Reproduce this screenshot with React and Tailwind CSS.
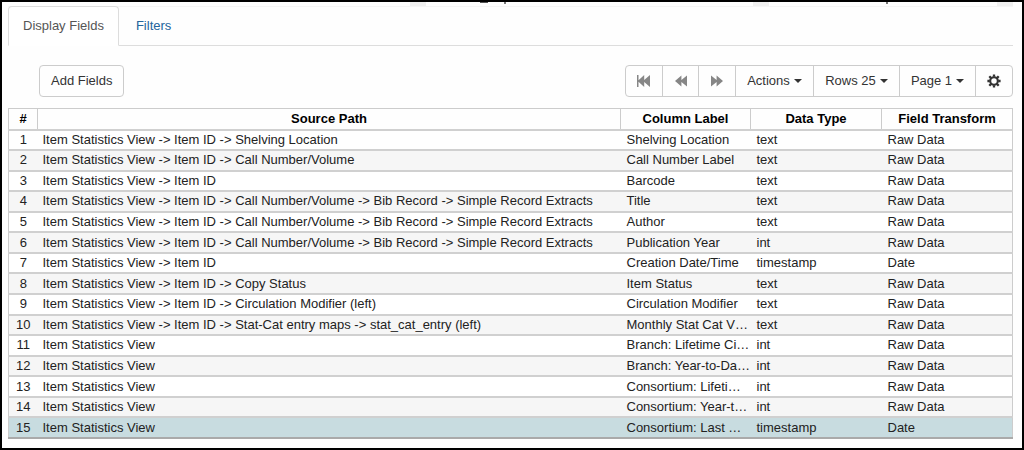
import { useState } from "react"

const rows = [
    ["Item Statistics View -> Item ID -> Shelving Location", "Shelving Location", "text", "Raw Data"],
    ["Item Statistics View -> Item ID -> Call Number/Volume", "Call Number Label", "text", "Raw Data"],
    ["Item Statistics View -> Item ID", "Barcode", "text", "Raw Data"],
    ["Item Statistics View -> Item ID -> Call Number/Volume -> Bib Record -> Simple Record Extracts", "Title", "text", "Raw Data"],
    ["Item Statistics View -> Item ID -> Call Number/Volume -> Bib Record -> Simple Record Extracts", "Author", "text", "Raw Data"],
    ["Item Statistics View -> Item ID -> Call Number/Volume -> Bib Record -> Simple Record Extracts", "Publication Year", "int", "Raw Data"],
    ["Item Statistics View -> Item ID", "Creation Date/Time", "timestamp", "Date"],
    ["Item Statistics View -> Item ID -> Copy Status", "Item Status", "text", "Raw Data"],
    ["Item Statistics View -> Item ID -> Circulation Modifier (left)", "Circulation Modifier", "text", "Raw Data"],
    ["Item Statistics View -> Item ID -> Stat-Cat entry maps -> stat_cat_entry (left)", "Monthly Stat Cat V…", "text", "Raw Data"],
    ["Item Statistics View", "Branch: Lifetime Ci…", "int", "Raw Data"],
    ["Item Statistics View", "Branch: Year-to-Da…", "int", "Raw Data"],
    ["Item Statistics View", "Consortium: Lifeti…", "int", "Raw Data"],
    ["Item Statistics View", "Consortium: Year-t…", "int", "Raw Data"],
    ["Item Statistics View", "Consortium: Last …", "timestamp", "Date"],
]

const Caret = () => (
    <span className="border-x-4 border-t-4 border-x-transparent border-t-[#333]"></span>
)

const FastBackward = () => (
    <svg viewBox="0 0 14 14" className="w-[14px] h-[14px]" fill="currentColor">
        <path d="M0 1h1.5v5.2L7.2 1v5L13 1v12L7.2 8v5L1.5 7.8V13H0z" />
    </svg>
)

const Backward = () => (
    <svg viewBox="0 0 14 14" className="w-[14px] h-[14px]" fill="currentColor">
        <path d="M1 7l6.4-5.5V6L13 1.5v11L7.4 8v4.5z" />
    </svg>
)

const Forward = () => (
    <svg viewBox="0 0 14 14" className="w-[14px] h-[14px]" fill="currentColor">
        <path d="M13 7L6.6 1.5V6L1 1.5v11L6.6 8v4.5z" />
    </svg>
)

const Cog = () => (
    <svg viewBox="0 0 14 14" className="w-[14px] h-[14px]">
        <g fill="none" stroke="#333">
            <circle cx="7" cy="7" r="3.8" strokeWidth="2.1" />
            <path d="M7 .4v2.4M7 11.2v2.4M.4 7h2.4M11.2 7h2.4M2.3 2.3l1.8 1.8M9.9 9.9l1.8 1.8M11.7 2.3L9.9 4.1M4.1 9.9l-1.8 1.8" strokeWidth="2.3" />
        </g>
    </svg>
)

// bottom edge of the source panels, scrolled mostly out of view
const PanelEdges = () => (
    <div className="h-1 ml-[6px] mr-[9px] flex justify-between overflow-hidden" aria-hidden="true">
        <div className="w-[418px] flex justify-end items-start">
            <i className="w-4 h-1 bg-[#f0f0f0]"></i>
        </div>
        <div className="w-[343px] pl-[54px] flex items-start">
            <i className="w-2 h-px bg-[#555]"></i>
            <i className="ml-4 w-[2px] h-[2px] bg-[#777]"></i>
            <i className="ml-auto w-4 h-1 bg-[#f0f0f0]"></i>
        </div>
        <div className="w-[244px] pl-[117px] flex items-start">
            <i className="w-[2px] h-[2px] bg-[#777]"></i>
            <i className="ml-auto w-4 h-1 bg-[#f0f0f0]"></i>
        </div>
    </div>
)

const Tabs = ({ tab, setTab }) => {
    const on = "border-[#ddd] border-b-white text-[#555] bg-white"
    const off = "border-transparent text-[#23649c]"
    return (
        <div role="tablist" className="ml-[6px] mr-[9px] flex border-t border-b border-t-[#f5f5f5] border-b-[#ddd]">
            {["Display Fields", "Filters"].map((name) => (
                <button
                    key={name}
                    role="tab"
                    aria-selected={tab === name}
                    onClick={() => setTab(name)}
                    className={`h-10 -my-px mr-[2px] px-[14px] pb-px border rounded-t ${tab === name ? on : off}`}
                >
                    {name}
                </button>
            ))}
        </div>
    )
}

const Toolbar = () => {
    const item = "flex items-center justify-center border-r border-[#ccc]"
    return (
        <div className="flex justify-between pl-[37px] pr-[9px] mt-[19px]">
            <button className="h-8 px-[11px] border border-[#ccc] rounded">Add Fields</button>
            <div className="h-8 flex border border-[#ccc] rounded">
                <button aria-label="First page" className={`${item} w-[37px] text-[#868686]`}><FastBackward /></button>
                <button aria-label="Previous page" className={`${item} w-9 text-[#868686]`}><Backward /></button>
                <button aria-label="Next page" className={`${item} w-[37px] text-[#868686]`}><Forward /></button>
                <button className={`${item} gap-1 w-[78px]`}>Actions <Caret /></button>
                <button className={`${item} gap-1 w-[86px]`}>Rows 25 <Caret /></button>
                <button className={`${item} gap-1 w-[76px]`}>Page 1 <Caret /></button>
                <button aria-label="Settings" className="w-9 flex items-center justify-center"><Cog /></button>
            </div>
        </div>
    )
}

const FieldsTable = () => {
    const head = "border border-[#ccc] font-bold text-black"
    return (
        <div className="mt-[11px] pl-[6px] pr-[9px]">
            <table className="w-full h-[331px] table-fixed border-collapse border border-[#ccc] leading-4">
                <thead>
                    <tr className="h-[21px]">
                        <th className={`${head} w-[29px]`}>#</th>
                        <th className={head}>Source Path</th>
                        <th className={`${head} w-[130px]`}>Column Label</th>
                        <th className={`${head} w-[131px]`}>Data Type</th>
                        <th className={`${head} w-[131px]`}>Field Transform</th>
                    </tr>
                </thead>
                <tbody className="text-[#222]">
                    {rows.map(([path, label, type, transform], i) => (
                        <tr
                            key={i}
                            className={`border-y-2 border-[#d0d0d0] ${i === 14 ? "bg-[#c8dce0] border-b-[#aaa]" : i % 2 ? "bg-[#f6f6f6]" : "bg-white"}`}
                        >
                            <td className="text-center">{i + 1}</td>
                            <td className="pl-[5px] truncate">{path}</td>
                            <td className="pl-[6px] whitespace-nowrap">{label}</td>
                            <td className="pl-[6px]">{type}</td>
                            <td className="pl-[6px]">{transform}</td>
                        </tr>
                    ))}
                </tbody>
            </table>
        </div>
    )
}

const App = () => {
    const [tab, setTab] = useState("Display Fields")
    return (
        <div className="min-h-screen border-2 border-black bg-[#fefefe] font-['Liberation_Sans',Arial,sans-serif] text-[13px] text-[#333]">
            <PanelEdges />
            <Tabs tab={tab} setTab={setTab} />
            <Toolbar />
            <FieldsTable />
        </div>
    )
}

export default App
